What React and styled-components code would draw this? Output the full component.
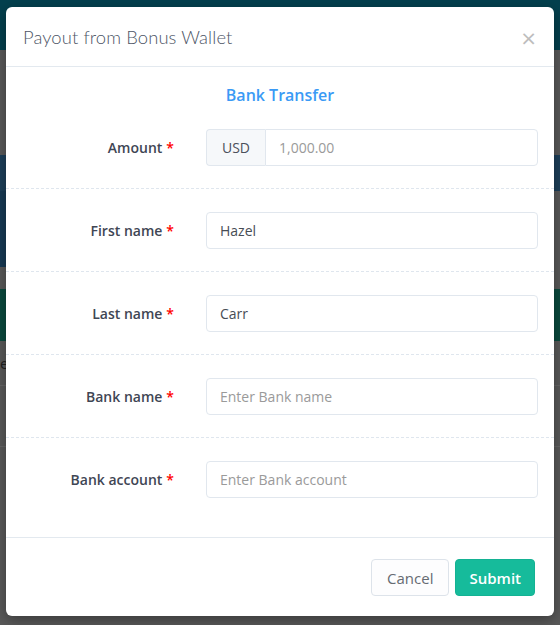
import React from "react";
import styled, { createGlobalStyle } from "styled-components";

const GlobalStyle = createGlobalStyle`
  html, body { margin: 0; padding: 0; }
  body { font-family: "Open Sans", "Noto Sans", sans-serif; background: #595959; }
  * { box-sizing: border-box; }
`;

const Page = styled.div`
  position: relative;
  width: 560px;
  height: 625px;
  overflow: hidden;
  background: #595959;
`;

const Backdrop = styled.div`
  display: flex;
  flex-direction: column;
`;

const Band = styled.div`
  height: ${(p) => p.$h}px;
  background: ${(p) => p.$bg || "transparent"};
  border-bottom: ${(p) => (p.$line ? "1px solid #666" : "none")};
  display: flex;
  align-items: center;
  color: #202020;
  font-size: 15px;
`;

const SideBlock = styled.div`
  width: ${(p) => p.$w}px;
  height: 100%;
  background: ${(p) => p.$bg};
`;

const Modal = styled.div`
  position: absolute;
  left: 6px;
  top: 7px;
  width: 548px;
  background: #fff;
  border-radius: 6px;
  box-shadow: 0 4px 14px rgba(0, 0, 0, 0.35);
  display: flex;
  flex-direction: column;
`;

const Header = styled.div`
  height: 60px;
  padding: 0 17px 0 17px;
  display: flex;
  align-items: center;
  justify-content: space-between;
  border-bottom: 1px solid #e3e9ef;
`;

const Title = styled.h4`
  margin: 0;
  font-family: "Lato", "Open Sans", sans-serif;
  font-weight: 300;
  font-size: 18.4px;
  color: #4d5566;
  letter-spacing: 0.1px;
`;

const Close = styled.span`
  font-family: "DejaVu Sans", sans-serif;
  font-size: 20px;
  line-height: 1;
  color: #bdbdbd;
  margin-top: 2px;
`;

const Body = styled.div`
  padding: 17px 0 17px;
`;

const Heading = styled.div`
  text-align: center;
  font-size: 16px;
  font-weight: 600;
  line-height: 22px;
  color: #3a9af5;
`;

const Row = styled.div`
  display: grid;
  grid-template-columns: 168px 1fr;
  column-gap: 32px;
  align-items: center;
  padding: 23px 16px 22px 0;
  border-bottom: ${(p) => (p.$last ? "none" : "1px dashed #dfe6ee")};
`;

const Label = styled.label`
  text-align: right;
  font-size: 14px;
  font-weight: 600;
  color: #3f4654;
`;

const Req = styled.span`
  color: #ff0000;
  margin-left: 4px;
`;

const Group = styled.div`
  display: flex;
  height: 37px;
`;

const Addon = styled.span`
  width: 59px;
  display: flex;
  align-items: center;
  justify-content: center;
  background: #f6f8fa;
  border: 1px solid #e1e7ee;
  border-right: none;
  border-radius: 4px 0 0 4px;
  font-size: 14px;
  color: #4a505a;
`;

const Input = styled.input`
  flex: 1;
  width: 100%;
  height: 37px;
  padding: 0 13px;
  border: 1px solid #e1e7ee;
  border-radius: ${(p) => (p.$grouped ? "0 4px 4px 0" : "4px")};
  font-family: "Open Sans", sans-serif;
  font-size: 14px;
  color: #474d55;
  outline: none;
  &::placeholder { color: #9a9a9a; }
`;

const Footer = styled.div`
  border-top: 1px solid #e3e9ef;
  padding: 21px 19px 20px;
  display: flex;
  justify-content: flex-end;
  gap: 6px;
`;

const Button = styled.button`
  height: 37px;
  padding: 0 ${(p) => (p.$primary ? "13px" : "15px")};
  border-radius: 4px;
  font-family: "Open Sans", sans-serif;
  font-size: 15px;
  font-weight: ${(p) => (p.$primary ? 600 : 400)};
  color: ${(p) => (p.$primary ? "#fff" : "#666b72")};
  background: ${(p) => (p.$primary ? "#16bb9b" : "#fdfdfe")};
  border: 1px solid ${(p) => (p.$primary ? "#14b293" : "#dde3ea")};
  cursor: pointer;
`;

const fields = [
  { label: "First name", value: "Hazel" },
  { label: "Last name", value: "Carr" },
  { label: "Bank name", placeholder: "Enter Bank name" },
  { label: "Bank account", placeholder: "Enter Bank account" },
];

export default function App() {
  return (
    <>
      <GlobalStyle />
      <Page>
        <Backdrop>
          <Band $h={50} $bg="#04404e" />
          <Band $h={105} />
          <Band $h={36} $bg="#1d3f59" />
          <Band $h={76}>
            <SideBlock $w={10} $bg="#173a54" />
          </Band>
          <Band $h={22} />
          <Band $h={52} $bg="#0b4a3e" />
          <Band $h={45} $line>
            <span>e</span>
          </Band>
          <Band $h={61} $line />
        </Backdrop>
        <Modal>
          <Header>
            <Title>Payout from Bonus Wallet</Title>
            <Close>×</Close>
          </Header>
          <Body>
            <Heading>Bank Transfer</Heading>
            <Row>
              <Label>
                Amount<Req>*</Req>
              </Label>
              <Group>
                <Addon>USD</Addon>
                <Input $grouped placeholder="1,000.00" />
              </Group>
            </Row>
            {fields.map((f, i) => (
              <Row key={f.label} $last={i === fields.length - 1}>
                <Label>
                  {f.label}
                  <Req>*</Req>
                </Label>
                <Input
                  defaultValue={f.value}
                  placeholder={f.placeholder}
                />
              </Row>
            ))}
          </Body>
          <Footer>
            <Button>Cancel</Button>
            <Button $primary>Submit</Button>
          </Footer>
        </Modal>
      </Page>
    </>
  );
}
